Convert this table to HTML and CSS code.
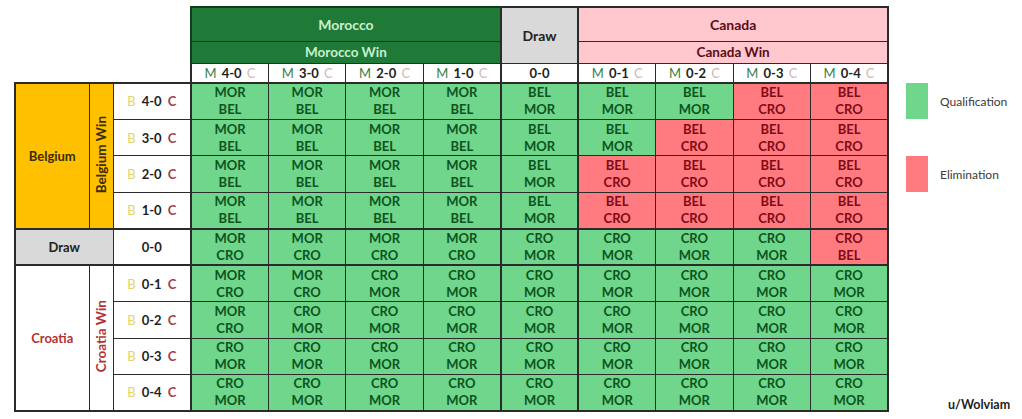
FILE: index.html
```html
<!DOCTYPE html>
<html>
<head>
<meta charset="utf-8">
<link rel="stylesheet" href="styles.css">
</head>
<body>
<div class="page">
  <table class="grid">
    <colgroup>
      <col class="c-team"><col class="c-win"><col class="c-score">
      <col class="c-d"><col class="c-d"><col class="c-d"><col class="c-d"><col class="c-d">
      <col class="c-d"><col class="c-d"><col class="c-d"><col class="c-d">
    </colgroup>
    <thead>
      <tr class="h1">
        <th class="corner" colspan="3" rowspan="3"></th>
        <th class="mor top gl" colspan="4">Morocco</th>
        <th class="drawh top gl" rowspan="2">Draw</th>
        <th class="can top gl" colspan="4">Canada</th>
      </tr>
      <tr class="h2">
        <th class="mor gl" colspan="4">Morocco Win</th>
        <th class="can gl" colspan="4">Canada Win</th>
      </tr>
      <tr class="h3">
        <th class="sc gl"><span class="m">M</span> 4-0 <span class="c">C</span></th>
        <th class="sc"><span class="m">M</span> 3-0 <span class="c">C</span></th>
        <th class="sc"><span class="m">M</span> 2-0 <span class="c">C</span></th>
        <th class="sc"><span class="m">M</span> 1-0 <span class="c">C</span></th>
        <th class="sc gl">0-0</th>
        <th class="sc gl"><span class="m">M</span> 0-1 <span class="c">C</span></th>
        <th class="sc"><span class="m">M</span> 0-2 <span class="c">C</span></th>
        <th class="sc"><span class="m">M</span> 0-3 <span class="c">C</span></th>
        <th class="sc"><span class="m">M</span> 0-4 <span class="c">C</span></th>
      </tr>
    </thead>
    <tbody>
      <tr class="gt">
        <th class="bel edge" rowspan="4">Belgium</th>
        <th class="bel vert" rowspan="4"><span>Belgium Win</span></th>
        <th class="rs"><span class="b">B</span> 4-0 <span class="cr">C</span></th>
        <td class="q gl">MOR<br>BEL</td><td class="q">MOR<br>BEL</td><td class="q">MOR<br>BEL</td><td class="q">MOR<br>BEL</td>
        <td class="q gl">BEL<br>MOR</td>
        <td class="q gl">BEL<br>MOR</td><td class="q">BEL<br>MOR</td><td class="e">BEL<br>CRO</td><td class="e">BEL<br>CRO</td>
      </tr>
      <tr>
        <th class="rs"><span class="b">B</span> 3-0 <span class="cr">C</span></th>
        <td class="q gl">MOR<br>BEL</td><td class="q">MOR<br>BEL</td><td class="q">MOR<br>BEL</td><td class="q">MOR<br>BEL</td>
        <td class="q gl">BEL<br>MOR</td>
        <td class="q gl">BEL<br>MOR</td><td class="e">BEL<br>CRO</td><td class="e">BEL<br>CRO</td><td class="e">BEL<br>CRO</td>
      </tr>
      <tr>
        <th class="rs"><span class="b">B</span> 2-0 <span class="cr">C</span></th>
        <td class="q gl">MOR<br>BEL</td><td class="q">MOR<br>BEL</td><td class="q">MOR<br>BEL</td><td class="q">MOR<br>BEL</td>
        <td class="q gl">BEL<br>MOR</td>
        <td class="e gl">BEL<br>CRO</td><td class="e">BEL<br>CRO</td><td class="e">BEL<br>CRO</td><td class="e">BEL<br>CRO</td>
      </tr>
      <tr>
        <th class="rs"><span class="b">B</span> 1-0 <span class="cr">C</span></th>
        <td class="q gl">MOR<br>BEL</td><td class="q">MOR<br>BEL</td><td class="q">MOR<br>BEL</td><td class="q">MOR<br>BEL</td>
        <td class="q gl">BEL<br>MOR</td>
        <td class="e gl">BEL<br>CRO</td><td class="e">BEL<br>CRO</td><td class="e">BEL<br>CRO</td><td class="e">BEL<br>CRO</td>
      </tr>
      <tr class="gt">
        <th class="drawr edge" colspan="2">Draw</th>
        <th class="rs">0-0</th>
        <td class="q gl">MOR<br>CRO</td><td class="q">MOR<br>CRO</td><td class="q">MOR<br>CRO</td><td class="q">MOR<br>CRO</td>
        <td class="q gl">CRO<br>MOR</td>
        <td class="q gl">CRO<br>MOR</td><td class="q">CRO<br>MOR</td><td class="q">CRO<br>MOR</td><td class="e">CRO<br>BEL</td>
      </tr>
      <tr class="gt">
        <th class="cro edge bottom" rowspan="4">Croatia</th>
        <th class="cro vert bottom" rowspan="4"><span>Croatia Win</span></th>
        <th class="rs"><span class="b">B</span> 0-1 <span class="cr">C</span></th>
        <td class="q gl">MOR<br>CRO</td><td class="q">MOR<br>CRO</td><td class="q">CRO<br>MOR</td><td class="q">CRO<br>MOR</td>
        <td class="q gl">CRO<br>MOR</td>
        <td class="q gl">CRO<br>MOR</td><td class="q">CRO<br>MOR</td><td class="q">CRO<br>MOR</td><td class="q">CRO<br>MOR</td>
      </tr>
      <tr>
        <th class="rs"><span class="b">B</span> 0-2 <span class="cr">C</span></th>
        <td class="q gl">MOR<br>CRO</td><td class="q">CRO<br>MOR</td><td class="q">CRO<br>MOR</td><td class="q">CRO<br>MOR</td>
        <td class="q gl">CRO<br>MOR</td>
        <td class="q gl">CRO<br>MOR</td><td class="q">CRO<br>MOR</td><td class="q">CRO<br>MOR</td><td class="q">CRO<br>MOR</td>
      </tr>
      <tr>
        <th class="rs"><span class="b">B</span> 0-3 <span class="cr">C</span></th>
        <td class="q gl">CRO<br>MOR</td><td class="q">CRO<br>MOR</td><td class="q">CRO<br>MOR</td><td class="q">CRO<br>MOR</td>
        <td class="q gl">CRO<br>MOR</td>
        <td class="q gl">CRO<br>MOR</td><td class="q">CRO<br>MOR</td><td class="q">CRO<br>MOR</td><td class="q">CRO<br>MOR</td>
      </tr>
      <tr class="last">
        <th class="rs"><span class="b">B</span> 0-4 <span class="cr">C</span></th>
        <td class="q gl">CRO<br>MOR</td><td class="q">CRO<br>MOR</td><td class="q">CRO<br>MOR</td><td class="q">CRO<br>MOR</td>
        <td class="q gl">CRO<br>MOR</td>
        <td class="q gl">CRO<br>MOR</td><td class="q">CRO<br>MOR</td><td class="q">CRO<br>MOR</td><td class="q">CRO<br>MOR</td>
      </tr>
    </tbody>
  </table>
  <aside class="legend">
    <div class="item"><span class="swatch sw-q"></span><span class="label">Qualification</span></div>
    <div class="item item-e"><span class="swatch sw-e"></span><span class="label">Elimination</span></div>
    <div class="credit">u/Wolviam</div>
  </aside>
</div>
</body>
</html>
```

FILE: styles.css
```css
html, body {
  margin: 0;
  background: #ffffff;
}
body {
  font-family: Lato, "Liberation Sans", sans-serif;
  color: #222;
}
.page {
  display: flex;
  align-items: stretch;
  padding: 6px 0 0 14px;
}
.grid {
  border-collapse: collapse;
  table-layout: fixed;
  width: 873px;
  font-weight: 700;
}
.c-team { width: 74px; }
.c-win { width: 24px; }
.c-score { width: 78px; }
.c-d { width: 77.44px; }

.grid th, .grid td {
  border: 1px solid #2b2b2b;
  padding: 0;
  text-align: center;
  vertical-align: middle;
  overflow: hidden;
  white-space: nowrap;
}
.grid th.corner { border: none; background: #fff; }

.h1 { height: 34px; }
.h2 { height: 22px; }
.h3 { height: 20px; }
tbody tr { height: 36.45px; }

.top { border-top-width: 2px !important; }
.gl { border-left-width: 2px !important; }
.gt > * { border-top-width: 2px !important; }
tr > :last-child { border-right-width: 2px !important; }
.edge { border-left-width: 2px !important; }
.last > *, .bottom { border-bottom-width: 2px !important; }
.h3 > * { border-bottom-width: 2px !important; }

.mor {
  background: #1f7a37;
  color: #c7efcf;
  font-size: 14px;
  border-color: #123d1c !important;
}
.h2 .mor, .h2 .can { font-size: 13.5px; }
.drawh {
  background: #d9d9d9;
  color: #222;
  font-size: 14px;
}
.can {
  background: #ffc7ce;
  color: #5a0d16;
  font-size: 14px;
}
.sc {
  background: #fff;
  font-size: 13px;
  color: #222;
}
.sc .m { color: #3d7c4a; font-weight: 400; margin-right: 2px; }
.sc .c { color: #cdb6b6; font-weight: 400; margin-left: 2px; }

.bel {
  background: #ffc000;
  color: #3a2c05;
  font-size: 13px;
}
.drawr {
  background: #d9d9d9;
  color: #222;
  font-size: 13px;
}
.cro {
  background: #fff;
  color: #b03434;
  font-size: 13px;
}
.vert span {
  display: inline-block;
  writing-mode: vertical-rl;
  transform: rotate(180deg);
  line-height: 22px;
  font-size: 13.5px;
}
.rs {
  background: #fff;
  font-size: 13px;
  color: #1e1e1e;
}
.rs .b { color: #e2d46a; font-weight: 400; margin-right: 3px; }
.rs .cr { color: #a3414c; font-weight: 700; margin-left: 3px; }

td.q, td.e {
  font-size: 13px;
  line-height: 17px;
}
td.q {
  background: #6fd68b;
  color: #0d541e;
}
td.e {
  background: #ff7b80;
  color: #800a15;
}

.legend {
  display: flex;
  flex-direction: column;
  margin-left: 17px;
  width: 118px;
  padding-top: 77px;
  box-sizing: border-box;
}
.item {
  display: flex;
  align-items: center;
  gap: 12px;
}
.item-e { margin-top: 37px; }
.swatch {
  display: block;
  width: 22px;
  height: 36px;
}
.sw-q { background: #6fd68b; }
.sw-e { background: #ff7b80; }
.label {
  font-size: 12px;
  color: #3a3a3a;
}
.credit {
  margin-top: auto;
  padding-left: 42px;
  font-size: 12.5px;
  font-weight: 700;
  color: #222;
  line-height: 14px;
}
```
